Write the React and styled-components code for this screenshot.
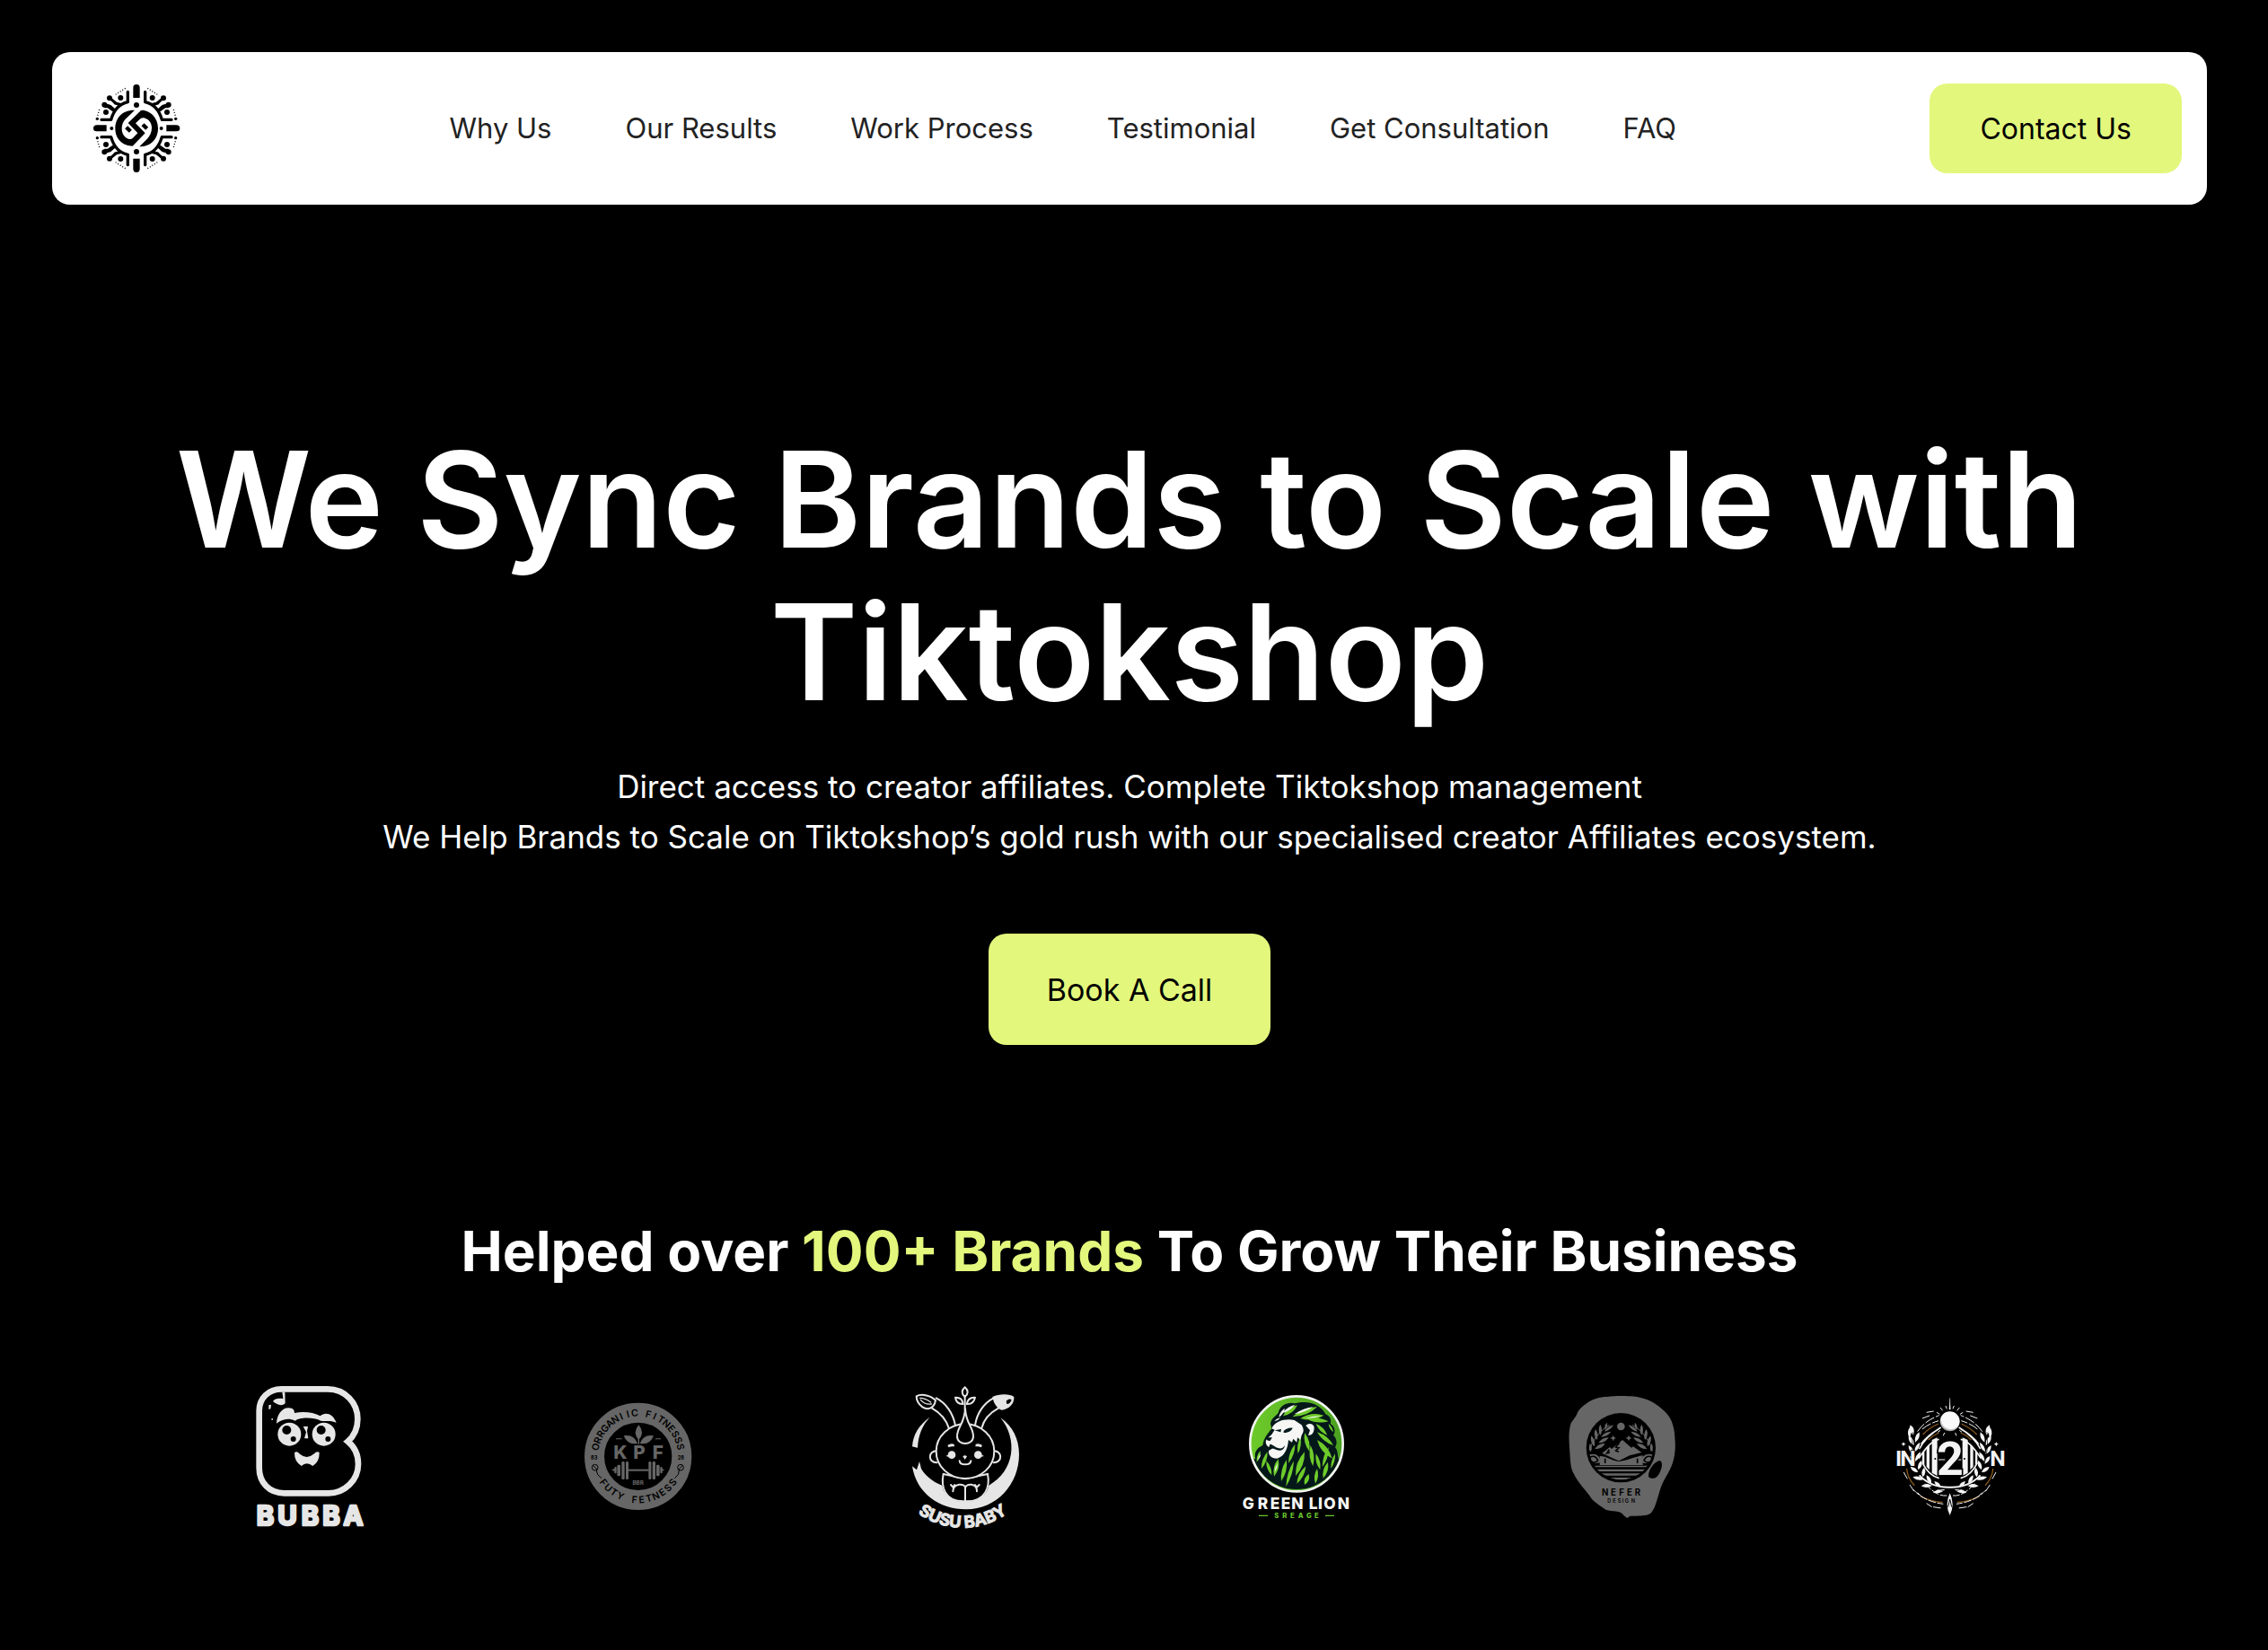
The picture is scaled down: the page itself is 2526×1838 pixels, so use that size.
import React from "react";
import styled, { createGlobalStyle } from "styled-components";

const LIME = "#e3f77c";
const FONT = `Inter, "Liberation Sans", sans-serif`;
const NARROW = `Roboto, "Liberation Sans", sans-serif`;

const GlobalStyle = createGlobalStyle`
  *, *::before, *::after { box-sizing: border-box; }
  html { background: #000; }
  body { margin: 0; background: #000; color: #fff; font-family: ${FONT}; }
`;

const Page = styled.div`
  padding: 58px 68px 58px 58px;
`;

const Header = styled.header`
  display: flex;
  align-items: center;
  justify-content: space-between;
  padding: 35px 28px;
  border-radius: 20px;
  background: #fff;
`;

const LogoLink = styled.a`
  display: block;
  padding: 0 17px;
  line-height: 0;
`;

const Nav = styled.nav`
  display: flex;
  gap: 82px;
`;

const NavLink = styled.a`
  color: #222;
  font-size: 31px;
  line-height: 40px;
  text-decoration: none;
  white-space: nowrap;
`;

const Button = styled.button`
  height: ${(p) => (p.$large ? 124 : 100)}px;
  padding: 0 ${(p) => (p.$large ? 65 : 56)}px;
  border: 0;
  border-radius: 20px;
  background: ${LIME};
  color: #000;
  font-family: inherit;
  font-size: ${(p) => (p.$large ? 34 : 32)}px;
  white-space: nowrap;
  cursor: pointer;
`;

const Hero = styled.section`
  display: flex;
  flex-direction: column;
  align-items: center;
  padding-top: 244px;
  text-align: center;
`;

const Title = styled.h1`
  margin: 0;
  font-size: 148px;
  font-weight: 600;
  line-height: 170px;
`;

const Lead = styled.p`
  margin: 36px 0 80px;
  font-size: 35px;
  line-height: 56px;
`;

const Brands = styled.section`
  padding-top: 190px;
`;

const BrandsTitle = styled.h2`
  margin: 0;
  font-size: 62px;
  font-weight: 700;
  line-height: 80px;
  text-align: center;
`;

const Accent = styled.span`
  color: ${LIME};
`;

const BrandRow = styled.ul`
  display: flex;
  justify-content: space-between;
  margin: 98px 0 0;
  padding: 0 227px;
  list-style: none;
`;

const BrandItem = styled.li`
  line-height: 0;
`;

const LogoSvg = styled.svg`
  display: block;
  overflow: visible;
  font-family: ${FONT};
`;

/* A pointed leaf from (x1, y1) to (x2, y2); w is how far each side bulges. */
const leaf = (x1, y1, x2, y2, w) => {
  const dx = x2 - x1;
  const dy = y2 - y1;
  const len = Math.hypot(dx, dy) || 1;
  const nx = (-dy / len) * w;
  const ny = (dx / len) * w;
  const mx = (x1 + x2) / 2;
  const my = (y1 + y2) / 2;
  return `M${x1} ${y1}Q${mx + nx} ${my + ny} ${x2} ${y2}Q${mx - nx} ${my - ny} ${x1} ${y1}Z`;
};
const leaves = (list) => list.map((l) => leaf(...l)).join("");

/* Even letter positions for a wordmark that runs round a badge. */
const spread = (word, from, to) =>
  [...word].map((_, i) => from + ((to - from) * i) / (word.length - 1)).join(" ");

const Mark = ({ label, viewBox, children }) => (
  <LogoSvg width="120" height="180" viewBox={viewBox} role="img" aria-label={label}>
    {children}
  </LogoSvg>
);

const SyncQuadrant = () => (
  <>
    <path
      d="M364 188V222C392 228 410 246 420 281H452M408 250L424 236L442 231M390 230L406 226"
      fill="none"
      stroke="#000"
      strokeWidth="10"
      strokeLinecap="round"
      strokeLinejoin="round"
    />
    <path d="M404 226L424 209M412 250L430 237H442" stroke="#000" strokeWidth="9" fill="none" />
    <circle cx="388" cy="208" r="9" />
    <circle cx="437" cy="256" r="9" />
    <circle cx="425" cy="209" r="9" />
    <circle cx="442" cy="231" r="9" />
    <circle cx="466" cy="278" r="5" />
    <path
      d="M372 176L410 200M459 247L465 268"
      stroke="#000"
      strokeWidth="4"
      strokeDasharray="3 6"
    />
  </>
);

const SyncLogo = () => (
  <LogoSvg width="98" height="98" viewBox="188 163 294 294" role="img" aria-label="Sync">
    {["", "translate(670 0) scale(-1 1)", "translate(0 620) scale(1 -1)", "rotate(180 335 310)"].map(
      (t) => (
        <g key={t} transform={t || undefined}>
          <SyncQuadrant />
        </g>
      )
    )}
    <path d="M324 208V174Q324 163 335 163Q346 163 346 174V208ZM324 411V445Q324 457 335 457Q346 457 346 445V411Z" />
    <path d="M235 299H202Q191 299 191 310Q191 320 202 320H235ZM435 299H468Q480 299 480 310Q480 320 468 320H435Z" />
    <circle cx="335" cy="232" r="9" />
    <circle cx="335" cy="388" r="9" />
    <circle cx="252" cy="310" r="6" />
    <circle cx="418" cy="310" r="6" />
    <path
      d="M329 249C288 247 264 276 264 310C264 348 292 369 322 369L364 326L332 293L348 278C352 275 358 274 364 276C378 280 386 293 386 308C386 324 380 336 370 346L345 371C384 371 407 344 407 310C407 274 382 252 357 249L350 250L307 292L339 326L322 343C318 347 313 347 308 345C294 341 286 326 286 311C286 298 290 287 298 279Z"
    />
    <path d="M301 306L315 320M356 297L370 311" stroke="#000" strokeWidth="13" />
  </LogoSvg>
);

const Bubba = () => (
  <Mark label="Bubba" viewBox="75 36 360 540">
    <path
      d="M160 82H315C375 82 415 130 415 182C415 215 402 240 382 257C404 275 417 300 417 332C417 388 370 430 318 430H170C120 430 86 395 86 345V155C86 112 118 82 160 82Z"
      fill="none"
      stroke="#e6e6e6"
      strokeWidth="20"
    />
    <g fill="#e6e6e6">
      <path d="M144 197C145 168 162 145 184 145C200 145 204 154 204 162C236 156 268 160 290 172C304 158 332 160 344 195C326 184 306 192 292 188C270 176 222 174 206 188C182 176 160 184 144 197Z" />
      <path d="M132 123C138 112 152 112 166 114L163 92H172L173 130C160 142 142 132 132 123ZM118 136L126 134L124 148L118 150ZM127 181H132V185H127Z" />
      <circle cx="187" cy="233" r="39" />
      <circle cx="302" cy="233" r="39" />
      <path d="M233 207H249L246 222L250 247H237L243 226Z" />
      <path d="M204 294Q214 288 220 298Q245 320 270 298Q278 288 287 294Q288 325 265 339Q245 322 227 339Q203 324 204 294Z" />
    </g>
    <circle cx="178" cy="219" r="15" />
    <circle cx="200" cy="249" r="9" />
    <circle cx="293" cy="219" r="15" />
    <circle cx="316" cy="249" r="9" />
    <text
      x="106 180 256 327 400"
      y="537"
      textAnchor="middle"
      fontSize="88"
      fontWeight="700"
      fill="#e6e6e6"
      stroke="#e6e6e6"
      strokeWidth="8"
      strokeLinejoin="round"
    >
      BUBBA
    </text>
  </Mark>
);

const KPF_TOP = "ORRGANIIC FITNESSS";
const KPF_BOTTOM = "FUTY FETNESS";

const Kpf = () => (
  <Mark label="KPF Organic Fitness" viewBox="60 -24 360 540">
    <defs>
      <path id="kpf-top" d="M108 247A134 134 0 0 1 376 247" />
      <path id="kpf-bottom" d="M86 247A156 156 0 0 0 398 247" />
    </defs>
    <circle cx="242" cy="247" r="146" fill="none" stroke="#666" strokeWidth="66" />
    <g fontWeight="600" fontSize="32" textAnchor="middle">
      <text x={spread(KPF_TOP, 30, 391)}>
        <textPath href="#kpf-top">{KPF_TOP}</textPath>
      </text>
      <text x={spread(KPF_BOTTOM, 100, 390)}>
        <textPath href="#kpf-bottom">{KPF_BOTTOM}</textPath>
      </text>
    </g>
    <g fontSize="17" fontWeight="700" textAnchor="middle">
      <text x="95" y="259">83</text>
      <text x="385" y="259">28</text>
    </g>
    <g fill="none" stroke="#000" strokeWidth="3">
      <circle cx="98" cy="284" r="10" />
      <path d="M90 276L106 292M103 294L107 308L120 320" />
      <circle cx="384" cy="284" r="10" />
      <path d="M392 276L376 292M379 294L376 308L364 320" />
    </g>
    <g fill="#666">
      <path d={leaves([[244, 192, 244, 142, 22], [240, 204, 194, 178, 22], [248, 204, 294, 178, 22]])} />
      <path d="M168 187H188V190H168ZM300 187H318V190H300ZM242 180H246V206H242Z" />
      <text y="256" x="160 226 290" fontSize="62" fontWeight="800">
        KPF
      </text>
      <path d="M153 292L164 288V298ZM331 292L320 288V298Z" />
      <rect x="163" y="282" width="7" height="22" rx="3" />
      <rect x="172" y="275" width="11" height="38" rx="4" />
      <rect x="187" y="264" width="10" height="60" rx="4" />
      <rect x="201" y="264" width="9" height="60" rx="4" />
      <rect x="210" y="290" width="68" height="6" />
      <rect x="277" y="264" width="9" height="60" rx="4" />
      <rect x="290" y="264" width="10" height="60" rx="4" />
      <rect x="303" y="275" width="11" height="38" rx="4" />
      <rect x="316" y="282" width="7" height="22" rx="3" />
      <text x="242" y="343" fontSize="19" fontWeight="700" textAnchor="middle">
        BBR
      </text>
    </g>
  </Mark>
);

const Susu = () => (
  <Mark label="Susu Baby" viewBox="75 36 360 540">
    <defs>
      <path id="susu-arc" d="M82 485A256 256 0 0 0 412 485" />
    </defs>
    <g fill="#e6e6e6">
      <path d="M137 176C100 202 80 236 78 274L96 278C98 236 112 202 137 176Z" />
      <path d="M373 178C414 206 435 250 435 300C435 400 360 484 258 484C168 484 92 430 78 340L93 352L102 324L108 348C122 372 146 392 178 404C182 436 214 462 254 458C296 462 328 438 334 404C420 356 432 250 373 178Z" />
    </g>
    <path
      d="M182 366C174 405 184 460 254 457C326 460 338 405 330 366L255 382Z"
      fill="#000"
      stroke="#e6e6e6"
      strokeWidth="6"
    />
    <g fill="#000" stroke="#e6e6e6" strokeWidth="6" strokeLinecap="round" strokeLinejoin="round">
      <path d="M200 212C190 180 172 162 144 146M222 203C214 162 190 128 158 112M288 203C294 162 318 128 350 112M310 212C318 182 340 160 366 146" />
      <path d="M160 289C130 288 130 328 160 328M350 289C380 288 380 328 350 328" />
      <ellipse cx="255" cy="290" rx="97" ry="91" />
      <path d="M255 148C252 200 228 208 228 240C228 272 282 272 282 240C282 208 258 200 255 148Z" />
      <path d="M255 458V412C255 396 215 396 214 424M255 412C258 396 295 396 294 424M207 402L214 410L220 402M302 402L294 410L288 402" fill="none" />
      <path d="M236 322C238 338 272 338 274 322" fill="none" />
      <path d={leaves([[254, 108, 254, 76, 18], [248, 132, 222, 110, 16], [260, 132, 288, 110, 16]])} />
      <path d="M254 108V150" />
      <path d="M92 106C110 96 142 104 156 120C150 150 128 152 112 142C98 132 92 118 92 106Z" />
      <path d="M104 112C116 112 130 118 140 126M106 118C116 130 128 134 142 132" strokeWidth="4" fill="none" />
    </g>
    <g fill="#e6e6e6">
      <path d="M346 108C370 96 406 98 418 108C420 130 402 150 376 152C360 148 348 124 346 108Z" />
      <circle cx="210" cy="302" r="13" />
      <circle cx="298" cy="302" r="13" />
      <path d="M190 306L206 298V310ZM318 306L302 298V310ZM247 307Q254 300 261 307L254 318Z" />
      <path d="M196 270Q206 262 218 266L219 274Q208 272 200 277ZM312 270Q302 262 290 266L289 274Q300 272 308 277Z" />
      <text fontSize="55" fontWeight="700" textAnchor="middle" stroke="#e6e6e6" strokeWidth="3" strokeLinejoin="round">
        <textPath href="#susu-arc" startOffset="50%">
          SUSU BABY
        </textPath>
      </text>
    </g>
    <path d="M392 122Q402 112 410 118Q406 132 394 132Z" />
  </Mark>
);

const Lion = () => (
  <Mark label="Green Lion" viewBox="60 6 360 540">
    <defs>
      <linearGradient id="lion-bg" x1="0" x2="1" y1="0" y2="0">
        <stop offset="0" stopColor="#6ecb2a" />
        <stop offset="1" stopColor="#4aa020" />
      </linearGradient>
      <clipPath id="lion-clip">
        <circle cx="249" cy="235" r="152" />
      </clipPath>
    </defs>
    <ellipse cx="249" cy="235" rx="155" ry="159" fill="url(#lion-bg)" />
    <g clipPath="url(#lion-clip)">
      <path
        d="M162 168C164 150 180 142 188 132C194 104 222 94 244 100C292 86 334 108 346 136C362 142 366 156 362 168C378 176 380 196 372 206C384 216 386 236 378 246C392 262 382 290 400 300V400H90V280L112 286C106 262 118 248 136 240C140 214 152 204 166 184Z"
        fill="#04181a"
      />
      <g fill="#6ecb2a">
        <path
          d={leaves([
            [204, 142, 252, 106, 16],
            [236, 144, 318, 112, 18],
            [262, 150, 340, 140, 18],
            [284, 152, 356, 160, 14],
            [314, 168, 352, 206, 12],
            [318, 196, 372, 240, 14],
            [356, 168, 372, 196, 7],
            [318, 222, 368, 284, 18],
            [276, 198, 292, 260, 14],
            [296, 240, 304, 310, 14],
            [262, 212, 254, 268, 10],
            [244, 236, 222, 300, 12],
            [128, 258, 116, 296, 9],
            [152, 262, 132, 318, 12],
            [148, 292, 166, 340, 11],
            [188, 286, 174, 344, 15],
            [216, 288, 198, 360, 14],
            [240, 292, 214, 378, 12],
            [276, 262, 246, 342, 18],
            [280, 310, 250, 368, 14],
            [314, 268, 328, 322, 12],
            [356, 246, 336, 312, 12],
            [290, 336, 276, 372, 14],
            [318, 318, 312, 368, 12],
            [354, 296, 338, 350, 14],
            [378, 268, 364, 318, 9],
          ])}
        />
      </g>
      <g fill="#f6f7f5">
        <path d="M166 184C178 158 212 150 242 156L266 172C276 188 272 198 266 206L262 222L252 214L250 230L238 218L234 230L222 222C220 252 208 278 184 284C164 284 154 272 156 258L170 250C152 248 142 236 148 220L166 204L176 188Z" />
        <path d="M280 174C288 164 306 166 308 180C308 198 300 208 288 206L294 190Z" />
        <path d={leaves([[202, 132, 244, 104, 9], [190, 146, 210, 116, 8], [242, 136, 304, 112, 8], [174, 160, 196, 148, 5], [280, 150, 330, 142, 5], [186, 300, 176, 330, 5], [130, 268, 120, 290, 4]])} />
      </g>
      <path
        d="M206 192C214 184 226 180 236 182C232 192 220 198 206 198ZM148 214L168 214L160 226L148 222ZM160 236C172 238 176 246 190 250C200 252 206 246 210 240C208 254 198 260 184 256C174 252 170 250 156 250ZM176 190L198 186L196 196Z"
        fill="#04181a"
      />
    </g>
    <ellipse cx="249" cy="235" rx="155" ry="159" fill="none" stroke="#f2f4f2" strokeWidth="8" />
    <text x="68 119 161 197 232 275 290 321 340 386" y="452" fontSize="52" fontWeight="800" fill="#f6f7f5">
      GREEN LION
    </text>
    <text x="175 202 228 254 282 309" y="482" fontSize="23" fontWeight="800" fill="#6ac630">
      SREAGE
    </text>
    <path d="M123 473H153V477H123ZM345 473H375V477H345Z" fill="#6ac630" />
  </Mark>
);

const nefLeaves = [
  [152, 262, 150, 234, 9],
  [164, 244, 154, 208, 11],
  [172, 222, 168, 186, 11],
  [184, 206, 184, 170, 10],
  [200, 188, 206, 164, 8],
  [166, 252, 200, 234, 12],
  [178, 232, 212, 214, 11],
  [186, 212, 220, 194, 10],
  [198, 194, 228, 172, 9],
];

const Nefer = () => (
  <Mark label="Nefer Design" viewBox="75 6 360 540">
    <defs>
      <clipPath id="nefer-clip">
        <circle cx="253" cy="248" r="107" />
      </clipPath>
    </defs>
    <path
      d="M206 78C240 74 300 74 322 82C352 88 376 106 396 124C420 144 432 176 433 214C438 262 430 300 410 334C394 360 386 380 380 402C372 424 370 444 354 466C340 478 310 476 284 476L274 483L262 474C252 456 222 462 204 456C172 434 160 428 148 408C130 384 108 362 96 336C84 318 84 290 82 262C80 224 76 200 86 166C100 146 104 142 110 126C132 98 168 78 206 78Z"
      fill="#666"
    />
    <path d="M382 291C396 294 390 322 376 342C366 354 350 352 345 344C344 324 362 296 382 291Z" />
    <circle cx="253" cy="248" r="116" />
    <g clipPath="url(#nefer-clip)" fill="#666">
      <circle cx="253" cy="177" r="13" />
      <path d={leaves(nefLeaves)} />
      <path d={leaves(nefLeaves)} transform="translate(506 0) scale(-1 1)" />
      <path d="M145 262Q165 200 215 172M361 262Q341 200 291 172" fill="none" stroke="#666" strokeWidth="3" />
      <path d="M227 206L230 213L237 216L230 219L227 226L224 219L217 216L224 213ZM279 206L282 213L289 216L282 219L279 226L276 219L269 216L276 213Z" />
      <path d="M190 266L216 246L222 252L258 222L288 248L294 244L322 264L282 274L246 292L228 284Z" />
      <path d="M140 274C168 262 184 276 186 296C166 304 150 298 140 290ZM366 274C338 262 322 276 320 296C340 304 356 298 366 290Z" />
      <path d="M182 276C206 276 222 292 246 294C280 290 300 278 326 274V306H182Z" />
      <path d="M140 308H366V313H140ZM140 320H366V327H140ZM140 334H366V341H140ZM170 348H336V356H170Z" />
    </g>
    <path
      d="M248 230L236 246L246 248L236 258L246 262M214 254L206 266L216 264M150 280Q166 270 176 290Q166 302 154 294M356 280Q340 270 330 290Q340 302 352 294M200 284V300M308 284V300"
      fill="none"
      stroke="#000"
      strokeWidth="5"
    />
    <text y="409" x="189 219 247 273 299" fontSize="29" fontWeight="700">
      NEFER
    </text>
    <text y="432" x="208 226 242 257 266 287" fontSize="17" fontWeight="600">
      DESIGN
    </text>
  </Mark>
);

const wreath = [
  [120, 206, 110, 172, 14],
  [108, 216, 106, 182, 10],
  [126, 230, 140, 196, 12],
  [122, 240, 104, 208, 13],
  [124, 262, 142, 230, 11],
  [122, 270, 104, 240, 12],
  [126, 294, 144, 262, 11],
  [126, 302, 108, 276, 12],
  [136, 322, 148, 290, 12],
  [136, 330, 110, 312, 12],
  [152, 346, 156, 314, 12],
  [154, 354, 118, 346, 12],
  [180, 368, 164, 340, 12],
  [184, 374, 146, 376, 12],
  [212, 380, 190, 360, 11],
  [226, 388, 186, 398, 12],
];

const InTwoHalf = () => (
  <>
    <path d={leaves(wreath)} fill="#f4f4f4" />
    <path d="M118 196Q108 290 150 350Q186 386 236 396" fill="none" stroke="#000" strokeWidth="2" />
    <path
      d="M140 252Q160 212 212 180M146 236Q166 208 204 186M138 284Q176 224 206 220M150 298Q170 340 206 350"
      fill="none"
      stroke="#f4f4f4"
      strokeWidth="5"
    />
    <path
      d="M134 194Q158 158 206 140M150 186Q170 168 204 158"
      fill="none"
      stroke="#f4f4f4"
      strokeWidth="3"
      strokeDasharray="34 6"
    />
    <path
      d="M152 204Q172 182 204 168M170 222Q186 206 206 198M98 318Q100 350 124 374M144 410Q180 430 218 430"
      fill="none"
      stroke="#8a5a1c"
      strokeWidth="4"
    />
    <path
      d="M160 368Q198 412 232 408M120 388Q156 428 220 436M88 330L100 352M108 372L124 396M186 446L214 450M164 434L182 446M134 398L146 410M150 150L176 140M164 130L188 126"
      fill="none"
      stroke="#f4f4f4"
      strokeWidth="3"
      strokeDasharray="26 5"
    />
    <path d="M182 222L200 214V342L182 332ZM164 246L174 238V322L164 312ZM150 268L157 256V306L150 298Z" fill="#f4f4f4" />
    <path d="M87 229L90 234L95 236L90 238L87 243L84 238L79 236L84 234Z" fill="#f4f4f4" />
    <path d="M232 118L228 108M218 124L210 114M208 136L198 130M224 198L220 208M210 190L202 196" stroke="#f4f4f4" strokeWidth="3" />
    <path d="M204 288H226" stroke="#f4f4f4" strokeWidth="3" />
    <circle cx="193" cy="285" r="3" />
  </>
);

const InTwo = () => (
  <Mark label="IN2N" viewBox="60 6 360 540">
    <defs>
      <radialGradient id="moon" cx="0.55" cy="0.4" r="0.62">
        <stop offset="0.75" stopColor="#fafafa" />
        <stop offset="1" stopColor="#777" />
      </radialGradient>
    </defs>
    <InTwoHalf />
    <g transform="translate(484 0) scale(-1 1)">
      <InTwoHalf />
    </g>
    <path d="M140 340Q180 382 242 380Q304 382 344 340" fill="none" stroke="#f4f4f4" strokeWidth="6" />
    <circle cx="242" cy="160" r="33" fill="url(#moon)" />
    <path d="M240 120L242 82L244 120Z" fill="#f4f4f4" stroke="#f4f4f4" />
    <path d={leaf(242, 400, 242, 474, 18)} fill="#f4f4f4" />
    <path d="M242 420L236 446M242 420L248 446" stroke="#000" strokeWidth="3" />
    <g fontWeight="700" fill="#f4f4f4" fontFamily={NARROW} stroke="#000" paintOrder="stroke">
      <text x="60 76" y="310" fontSize="74" strokeWidth="4">
        IN
      </text>
      <text x="402" y="310" fontSize="74" strokeWidth="4" textAnchor="middle">
        N
      </text>
      <text x="243" y="340" fontSize="156" strokeWidth="10" textAnchor="middle">
        2
      </text>
    </g>
  </Mark>
);

const links = ["Why Us", "Our Results", "Work Process", "Testimonial", "Get Consultation", "FAQ"];
const brands = [Bubba, Kpf, Susu, Lion, Nefer, InTwo];

export default function App() {
  return (
    <>
      <GlobalStyle />
      <Page>
        <Header>
          <LogoLink href="#home" aria-label="Home">
            <SyncLogo />
          </LogoLink>
          <Nav>
            {links.map((l) => (
              <NavLink key={l} href={`#${l.toLowerCase().replace(/ /g, "-")}`}>
                {l}
              </NavLink>
            ))}
          </Nav>
          <Button type="button">Contact Us</Button>
        </Header>
        <main>
          <Hero>
            <Title>We Sync Brands to Scale with Tiktokshop</Title>
            <Lead>
              Direct access to creator affiliates. Complete Tiktokshop management
              <br />
              We Help Brands to Scale on Tiktokshop’s gold rush with our specialised creator Affiliates ecosystem.
            </Lead>
            <Button type="button" $large>
              Book A Call
            </Button>
          </Hero>
          <Brands>
            <BrandsTitle>
              Helped over <Accent>100+ Brands</Accent> To Grow Their Business
            </BrandsTitle>
            <BrandRow>
              {brands.map((Brand, i) => (
                <BrandItem key={i}>
                  <Brand />
                </BrandItem>
              ))}
            </BrandRow>
          </Brands>
        </main>
      </Page>
    </>
  );
}
